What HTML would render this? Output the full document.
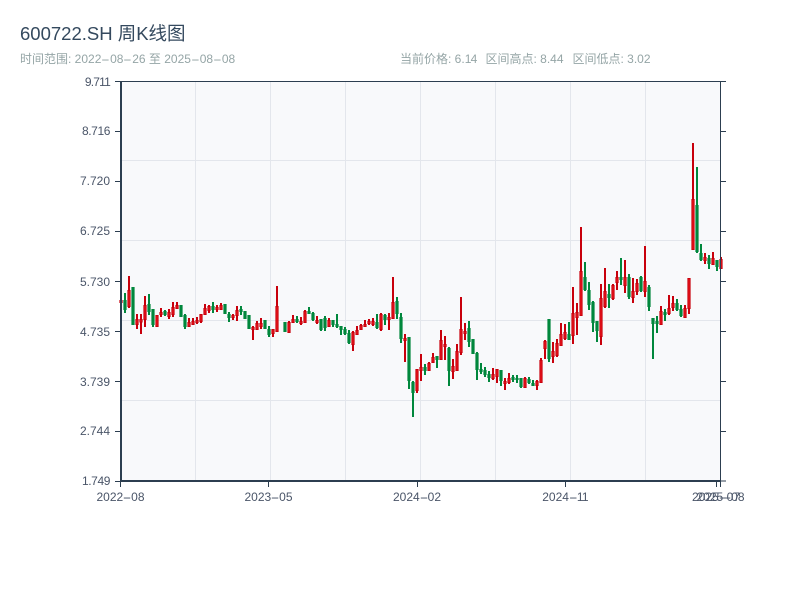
<!DOCTYPE html>
<html><head><meta charset="utf-8"><style>
html,body{margin:0;padding:0;background:#fff;width:800px;height:600px;overflow:hidden}
svg{position:absolute;left:0;top:0}
text,div{font-family:"Liberation Sans","Noto Sans CJK SC",sans-serif}
.l{position:absolute;white-space:nowrap;font-size:12px;line-height:14px;color:#4a5568;transform:translateX(-50%);top:490px}
.s{position:absolute;white-space:nowrap;font-size:12px;line-height:14px;color:#95a5a6;left:20px;top:52px}
.h{display:inline-block;width:8px;text-align:center;transform:scaleX(2.2)}
.s .h{width:8.75px}
.o{letter-spacing:-.8px}
</style></head><body>
<svg width="800" height="600" viewBox="0 0 800 600">
<text x="20" y="40" font-size="18.5" fill="#34495e">600722.SH 周K线图</text>
<text x="400" y="63" font-size="12" fill="#95a5a6">当前价格: 6.<tspan letter-spacing="-.8">1</tspan>4</text>
<text x="485.5" y="63" font-size="12" fill="#95a5a6">区间高点: 8.44</text>
<text x="572.5" y="63" font-size="12" fill="#95a5a6">区间低点: 3.02</text>
<rect x="121" y="81" width="600" height="400" fill="#f8f9fb"/>
<path d="M195.5 81V481M270.5 81V481M345.5 81V481M420.5 81V481M495.5 81V481M570.5 81V481M645.5 81V481M121 160.5H721M121 240.5H721M121 320.5H721M121 400.5H721" stroke="#e3e6ec" stroke-width="1" fill="none"/>
<g transform="translate(0.5 0)">
<g fill="none" stroke="#c8000c" stroke-width="2">
<path d="M120.5 300V303M128.5 276V308M136.5 314V329M140.5 314V334M144.5 296V327M156.5 315V327M160.5 308V317M168.5 309V319M172.5 302V317M176.5 302V308M188.5 318V326M192.5 318V324M196.5 317V324M200.5 314V323M204.5 304V315M208.5 305V313M216.5 305V312M220.5 303V310M232.5 314V320M236.5 306V321M252.5 326V340M256.5 321V330M260.5 318V329M272.5 329V337M276.5 286V332M288.5 321V333M292.5 315V323M300.5 317V325M304.5 310V323M316.5 316V324M328.5 318V327M352.5 331V351M356.5 326V334M360.5 324V330M364.5 320V326M368.5 319V325M372.5 318V326M380.5 313V331M388.5 313V330M392.5 277V319M404.5 334V362M416.5 369V393M420.5 354V381M428.5 362V371M432.5 353V363M440.5 330V360M444.5 336V360M452.5 359V379M456.5 344V370M460.5 297V355M464.5 323V340M492.5 368V380M496.5 369V383M504.5 378V390M508.5 373V384M524.5 377V388M536.5 380V390M540.5 358V383M544.5 340V359M552.5 342V363M556.5 339V357M560.5 323V346M564.5 324V340M572.5 287V344M576.5 303V335M580.5 227V316M600.5 284V345M604.5 268V308M612.5 284V300M616.5 271V290M624.5 260V293M632.5 278V303M636.5 279V295M644.5 246V297M660.5 306V325M668.5 295V315M672.5 296V311M684.5 305V318M688.5 278V314M692.5 143V250M704.5 253V264M712.5 252V264M720.5 257V269"/>
</g>
<g fill="#e8141c" stroke="#c8000c" stroke-width="1">
<path d="M119.4 300.5h2.2v2h-2.2zM127.4 290.5h2.2v16h-2.2zM135.4 319.5h2.2v5h-2.2zM139.4 319.5h2.2v2.5h-2.2zM143.4 305.5h2.2v14h-2.2zM155.4 315.5h2.2v11h-2.2zM159.4 312.5h2.2v2h-2.2zM167.4 312.5h2.2v4h-2.2zM171.4 307.5h2.2v7h-2.2zM175.4 305.5h2.2v3h-2.2zM187.4 322.5h2.2v4h-2.2zM191.4 321.5h2.2v3h-2.2zM195.4 320.5h2.2v2h-2.2zM199.4 314.5h2.2v7h-2.2zM203.4 308.5h2.2v6h-2.2zM207.4 306.5h2.2v4h-2.2zM215.4 307.5h2.2v2h-2.2zM219.4 305.5h2.2v4h-2.2zM231.4 315.5h2.2v2h-2.2zM235.4 310.5h2.2v5h-2.2zM251.4 327.5h2.2v2h-2.2zM255.4 323.5h2.2v6h-2.2zM259.4 323.5h2.2v3h-2.2zM271.4 329.5h2.2v4h-2.2zM275.4 306.5h2.2v25h-2.2zM287.4 322.5h2.2v10h-2.2zM291.4 319.5h2.2v3h-2.2zM299.4 321.5h2.2v2h-2.2zM303.4 311.5h2.2v11h-2.2zM315.4 320.5h2.2v2h-2.2zM327.4 320.5h2.2v6h-2.2zM351.4 332.5h2.2v12h-2.2zM355.4 330.5h2.2v4h-2.2zM359.4 325.5h2.2v4h-2.2zM363.4 324.5h2.2v2h-2.2zM367.4 321.5h2.2v2h-2.2zM371.4 321.5h2.2v3h-2.2zM379.4 314.5h2.2v15h-2.2zM387.4 317.5h2.2v2h-2.2zM391.4 302.5h2.2v16h-2.2zM403.4 338.5h2.2v2h-2.2zM415.4 369.5h2.2v21h-2.2zM419.4 367.5h2.2v3h-2.2zM427.4 363.5h2.2v7h-2.2zM431.4 357.5h2.2v5h-2.2zM439.4 340.5h2.2v19h-2.2zM443.4 344.5h2.2v2h-2.2zM451.4 366.5h2.2v5h-2.2zM455.4 351.5h2.2v19h-2.2zM459.4 329.5h2.2v23h-2.2zM463.4 331.5h2.2v2h-2.2zM491.4 374.5h2.2v4h-2.2zM495.4 369.5h2.2v7h-2.2zM503.4 381.5h2.2v2h-2.2zM507.4 378.5h2.2v4h-2.2zM523.4 378.5h2.2v9h-2.2zM535.4 381.5h2.2v4h-2.2zM539.4 360.5h2.2v22h-2.2zM543.4 341.5h2.2v7h-2.2zM551.4 351.5h2.2v5h-2.2zM555.4 343.5h2.2v12h-2.2zM559.4 334.5h2.2v11h-2.2zM563.4 332.5h2.2v6h-2.2zM571.4 313.5h2.2v22h-2.2zM575.4 312.5h2.2v5h-2.2zM579.4 271.5h2.2v44h-2.2zM599.4 298.5h2.2v38h-2.2zM603.4 291.5h2.2v15h-2.2zM611.4 285.5h2.2v13h-2.2zM615.4 277.5h2.2v5h-2.2zM623.4 277.5h2.2v8h-2.2zM631.4 291.5h2.2v6h-2.2zM635.4 283.5h2.2v8h-2.2zM643.4 281.5h2.2v10h-2.2zM659.4 311.5h2.2v13h-2.2zM667.4 308.5h2.2v5h-2.2zM671.4 303.5h2.2v4h-2.2zM683.4 308.5h2.2v9h-2.2zM687.4 278.5h2.2v30h-2.2zM691.4 199.5h2.2v50h-2.2zM703.4 257.5h2.2v3h-2.2zM711.4 258.5h2.2v6h-2.2zM719.4 259.5h2.2v9h-2.2z"/>
</g>
<g fill="none" stroke="#00873c" stroke-width="2">
<path d="M124.5 293V313M132.5 287V325M148.5 294V315M152.5 309V327M164.5 310V316M180.5 305V317M184.5 314V329M212.5 302V313M224.5 304V314M228.5 312V322M240.5 306V315M244.5 311V319M248.5 315V329M264.5 320V329M268.5 326V337M284.5 322V332M296.5 316V323M308.5 307V314M312.5 312V321M320.5 319V331M324.5 316V331M332.5 320V327M336.5 314V328M340.5 326V335M344.5 327V335M348.5 330V344M376.5 314V329M384.5 314V325M396.5 297V319M400.5 313V343M408.5 337V389M412.5 381V417M424.5 364V375M436.5 356V368M448.5 347V386M468.5 321V347M472.5 339V354M476.5 352V380M480.5 363V374M484.5 367V377M488.5 371V382M500.5 370V386M512.5 375V382M516.5 375V383M520.5 378V388M528.5 377V384M532.5 380V386M548.5 319V362M568.5 322V340M584.5 262V291M588.5 282V310M592.5 301V332M596.5 321V342M608.5 284V308M620.5 258V285M628.5 274V299M640.5 276V292M648.5 285V311M652.5 318V359M656.5 316V333M664.5 309V321M676.5 299V311M680.5 305V317M696.5 167V253M700.5 244V261M708.5 255V269M716.5 260V271"/>
</g>
<g fill="none" stroke="#00873c" stroke-width="3.2">
<path d="M124.5 300V310M132.5 287V325M148.5 304V312M152.5 309V325M164.5 311V315M180.5 305V317M184.5 315V327M212.5 306V310M224.5 304V314M228.5 314V318M240.5 309V312M244.5 311V319M248.5 315V329M264.5 320V329M268.5 329V335M284.5 322V332M296.5 319V322M308.5 311V314M312.5 313V320M320.5 319V330M324.5 318V328M332.5 320V325M336.5 324V327M340.5 326V330M344.5 329V334M348.5 333V343M376.5 322V328M384.5 315V320M396.5 301V314M400.5 317V339M408.5 337V381M412.5 382V393M424.5 367V371M436.5 356V360M448.5 348V371M468.5 328V342M472.5 339V354M476.5 353V370M480.5 369V372M484.5 370V375M488.5 374V378M500.5 370V381M512.5 377V380M516.5 378V380M520.5 378V387M528.5 379V383M532.5 383V386M548.5 319V359M568.5 334V340M584.5 277V290M588.5 290V305M592.5 302V323M596.5 321V331M608.5 294V298M620.5 277V280M628.5 277V297M640.5 277V291M648.5 287V307M652.5 318V324M656.5 321V324M664.5 312V315M676.5 303V310M680.5 309V316M696.5 205V252M700.5 253V260M708.5 258V264M716.5 260V267"/>
</g>
</g>
<path d="M115 81.5H726M720.5 81V481M715 481H726M720 131.5H726M720 181.5H726M720 231.5H726M720 281.5H726M720 331.5H726M720 381.5H726M720 431.5H726M115 131.5H121M115 181.5H121M115 231.5H121M115 281.5H121M115 331.5H121M115 381.5H121M115 431.5H121M115 481.5H121M120.5 481V487M268.5 481V487M417.5 481V487M565.5 481V487M716.5 481V487M720.5 481V487" stroke="#2c3e50" stroke-width="1" fill="none"/>
<path d="M121 81V482M120 481H721" stroke="#2c3e50" stroke-width="2" fill="none"/>
<g font-size="12" fill="#4a5568" text-anchor="end">
<text x="110" y="86" letter-spacing="-.8">9.711</text>
<text x="110" y="135" letter-spacing="-.4">8.716</text>
<text x="110" y="185">7.720</text>
<text x="110" y="235">6.725</text>
<text x="110" y="286">5.730</text>
<text x="110" y="336">4.735</text>
<text x="110" y="386">3.739</text>
<text x="110" y="435">2.744</text>
<text x="110" y="485" letter-spacing="-.4">1.749</text>
</g>
</svg>
<div class="s">时间范围: 2022<span class="h">-</span>08<span class="h">-</span>26 至 2025<span class="h">-</span>08<span class="h">-</span>08</div>
<div class="l" style="left:120.5px">2022<span class="h">-</span>08</div>
<div class="l" style="left:268.5px">2023<span class="h">-</span>05</div>
<div class="l" style="left:417px">2024<span class="h">-</span>02</div>
<div class="l" style="left:565px">2024<span class="h">-</span><span class="o">11</span></div>
<div class="l" style="left:716px">2025<span class="h">-</span>07</div>
<div class="l" style="left:720.5px">2025<span class="h">-</span>08</div>
</body></html>
